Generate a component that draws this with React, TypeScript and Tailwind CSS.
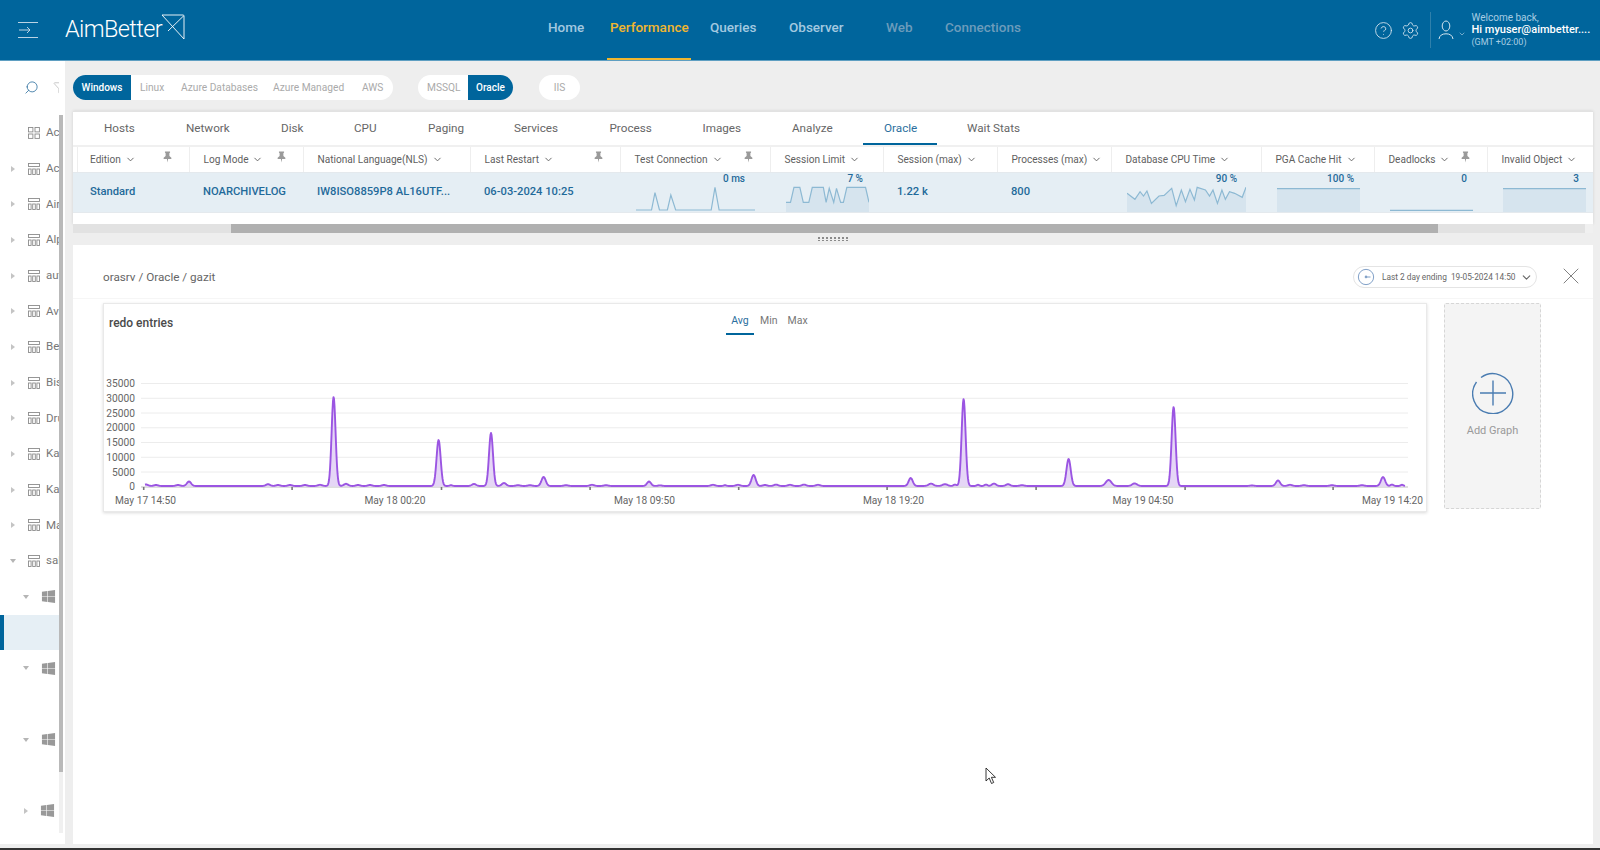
import { ChevronDown, X, Search, Filter, Settings, CircleHelp } from 'lucide-react';
import { FaWindows } from 'react-icons/fa';

const navItems = [
  { label: 'Home', cls: 'w-[62px] text-[#a3c9e0]' },
  { label: 'Performance', cls: 'w-[100px] text-[#f0b62f]', active: true },
  { label: 'Queries', cls: 'w-[79px] text-[#a3c9e0]' },
  { label: 'Observer', cls: 'w-[97px] text-[#a3c9e0]' },
  { label: 'Web', cls: 'w-[59px] text-[#6c9cbb]' },
  { label: 'Connections', cls: 'w-[90px] text-[#6c9cbb]' },
];

const tabs = [
  { label: 'Hosts', cls: 'w-[82px]' },
  { label: 'Network', cls: 'w-[95px]' },
  { label: 'Disk', cls: 'w-[73px]' },
  { label: 'CPU', cls: 'w-[74px]' },
  { label: 'Paging', cls: 'w-[86px]' },
  { label: 'Services', cls: 'w-[95.5px]' },
  { label: 'Process', cls: 'w-[93px]' },
  { label: 'Images', cls: 'w-[89.5px]' },
  { label: 'Analyze', cls: 'w-[92px]' },
  { label: 'Oracle', cls: 'w-[83px]', active: true },
  { label: 'Wait Stats', cls: 'w-[70px]' },
];

// spark points are in crop pixels, the viewBox takes care of the scale
const cpuLine =
  '192,250 215,268 230,245 240,258 250,243 263,280 285,258 300,256 322,235 335,287 350,240 362,275 375,238 388,270 396,232 420,240 432,258 442,240 455,280 468,240 478,268 490,245 505,250 527,262 538,232';
const limitLine =
  '772,277 785,277 795,232 812,232 822,277 838,277 848,232 880,232 888,277 897,235 910,277 918,235 930,277 938,277 948,232 1002,232 1012,277';
const testLine =
  '337,300 382,300 392,248 405,300 428,300 438,255 452,300 555,300 566,232 578,300 682,300';

type Col = {
  label: string;
  cls: string;
  pin?: boolean;
  value?: string;
  badge?: string;
  badgeCls?: string;
  svgCls?: string;
  box?: string;
  line?: string;
  fill?: boolean;
};

const cols: Col[] = [
  { label: 'Edition', cls: 'w-[112px]', pin: true, value: 'Standard' },
  { label: 'Log Mode', cls: 'w-[114px]', pin: true, value: 'NOARCHIVELOG' },
  { label: 'National Language(NLS)', cls: 'w-[167px]', value: 'IW8ISO8859P8 AL16UTF...' },
  { label: 'Last Restart', cls: 'w-[150px]', pin: true, value: '06-03-2024 10:25' },
  { label: 'Test Connection', cls: 'w-[150px]', pin: true, badge: '0 ms', badgeCls: 'w-[119px] pr-[10px]', svgCls: 'w-[119px]', box: '337 225 345 81', line: testLine },
  { label: 'Session Limit', cls: 'w-[113px]', badge: '7 %', badgeCls: 'w-[83px] pr-[6px]', svgCls: 'w-[83px]', box: '772 225 240 81', line: limitLine, fill: true },
  { label: 'Session (max)', cls: 'w-[114px]', value: '1.22 k' },
  { label: 'Processes (max)', cls: 'w-[114px]', value: '800' },
  { label: 'Database CPU Time', cls: 'w-[150px]', badge: '90 %', badgeCls: 'w-[119px] pr-[9px]', svgCls: 'w-[119px]', box: '192 225 346 81', line: cpuLine, fill: true },
  { label: 'PGA Cache Hit', cls: 'w-[113px]', badge: '100 %', badgeCls: 'w-[83px] pr-[6px]', svgCls: 'w-[83px]', box: '628 225 240 81', line: '628,236 868,236', fill: true },
  { label: 'Deadlocks', cls: 'w-[113px]', pin: true, badge: '0', badgeCls: 'w-[83px] pr-[6px]', svgCls: 'w-[83px]', box: '957 225 240 81', line: '957,301 1197,301' },
  { label: 'Invalid Object', cls: 'w-[106px]', badge: '3', badgeCls: 'w-[83px] pr-[7px]', svgCls: 'w-[83px]', box: '1287 225 240 81', line: '1287,236 1527,236', fill: true },
];

const treeRows = ['Ac', 'Air', 'Alp', 'aut', 'Avi', 'Be', 'Bis', 'Dru', 'Ka', 'Ka', 'Ma'];

// redo entries peaks: [x, height, width]
const peaks: number[][] = [
  [146, 1.5, 3], [156, 1, 3], [178, 1, 3], [189, 4.5, 3], [268, 1.8, 3], [278, 1, 3], [290, 1, 3], [305, 1, 3], [320, 1.2, 3],
  [333.6, 89, 2.8], [346, 2.2, 3], [358, 1, 3], [370, 1, 3], [384, 1, 3], [438.6, 46, 2.9], [451, 0.8, 2], [474, 2, 3],
  [491, 53, 2.8], [504, 3, 3], [518, 0.8, 3], [530, 0.8, 3], [543.6, 9, 3], [566, 0.8, 3], [592, 1.2, 3], [606, 0.8, 3],
  [649, 4.5, 2.8], [660, 0.6, 3], [713, 1.2, 3], [725, 0.8, 2], [738, 1.2, 3], [753.6, 11, 3], [765, 1, 3], [776, 1.4, 3],
  [790, 1.2, 3], [804, 1.4, 3], [818, 1.2, 3], [910.7, 8, 2.9], [931, 2.4, 3.5], [945, 1.8, 3.5], [955, 1.4, 2], [963.6, 87, 2.8],
  [978, 1.2, 2], [986, 1.4, 2], [994, 2.4, 3], [1008, 1.8, 3], [1022, 0.8, 3], [1068.6, 27, 3], [1108.6, 6, 4], [1134.6, 2.6, 3.5],
  [1173.6, 79, 2.8], [1252, 0.5, 3], [1278, 5.5, 3], [1290, 1.2, 3], [1304, 0.8, 3], [1332, 0.8, 3], [1362, 0.8, 3], [1383, 9, 3], [1392, 1.4, 2], [1402, 1.2, 2],
];

function redoPoints() {
  const out: string[] = [];
  for (let x = 145; x <= 1405; x += 0.5) {
    let h = 0.4;
    for (const [c, a, w] of peaks) h += a * Math.exp(-(((x - c) / w) ** 2));
    out.push(`${x},${(486.4 - h).toFixed(2)}`);
  }
  return out;
}

function Pin() {
  return (
    <svg viewBox="0 0 10 14" className="h-[12px] w-[9px] -mt-[5px]" fill="#9a9a9a">
      <path d="M2 0.5h6v1.2L7.2 2.6v3.2L9.5 8v1.2H5.7L5 13.5l-.7-4.3H.5V8l2.3-2.2V2.6L2 1.7z" />
    </svg>
  );
}

function HostIcon({ grid }: { grid?: boolean }) {
  if (grid) {
    return (
      <svg viewBox="0 0 12 12" className="h-[12px] w-[12px] shrink-0" fill="none" stroke="#8c8c8c" strokeWidth="0.9">
        <rect x="0.5" y="0.5" width="4.4" height="4.4" />
        <rect x="7" y="0.5" width="4.4" height="4.4" />
        <rect x="0.5" y="7" width="4.4" height="4.4" />
        <rect x="7" y="7" width="4.4" height="4.4" />
      </svg>
    );
  }
  return (
    <svg viewBox="0 0 12 12" className="h-[12px] w-[12px] shrink-0" fill="none" stroke="#8c8c8c" strokeWidth="0.9">
      <rect x="0.5" y="0.5" width="11" height="3" />
      <rect x="0.5" y="6" width="2.6" height="5.5" />
      <rect x="4.7" y="6" width="2.6" height="5.5" />
      <rect x="8.9" y="6" width="2.6" height="5.5" />
    </svg>
  );
}

function Caret({ open }: { open?: boolean }) {
  return open ? (
    <span className="h-0 w-0 shrink-0 border-x-[3px] border-t-[4px] border-x-transparent border-t-[#b5b5b5]" />
  ) : (
    <span className="h-0 w-0 shrink-0 border-y-[3px] border-l-[4px] border-y-transparent border-l-[#c4c4c4]" />
  );
}

function Sidebar() {
  return (
    <aside className="flex h-full w-[65px] shrink-0 bg-white">
      <div className="w-[59px] shrink-0 overflow-hidden">
        <div className="flex h-[54px] items-start pl-[24px] pt-[19px]">
          <Search size={15} color="#2c6f9e" strokeWidth={1.3} className="shrink-0 -scale-x-100" />
          <Filter size={14} color="#b5b5b5" strokeWidth={1.2} className="ml-[14px] mt-[1px] shrink-0" />
        </div>
        <div className="flex h-[35.7px] items-center pl-[28px]">
          <HostIcon grid />
          <span className="ml-[6px] whitespace-nowrap text-[11.5px] text-[#777]">Ac</span>
        </div>
        {treeRows.map((name, i) => (
          <div key={i} className="flex h-[35.7px] items-center pl-[11px]">
            <Caret />
            <span className="ml-[13px] flex shrink-0"><HostIcon /></span>
            <span className="ml-[6px] whitespace-nowrap text-[11.5px] text-[#777]">{name}</span>
          </div>
        ))}
        <div className="flex h-[35.7px] items-center pl-[10px]">
          <Caret open />
          <span className="ml-[12px] flex shrink-0"><HostIcon /></span>
          <span className="ml-[6px] whitespace-nowrap text-[11.5px] text-[#777]">sal</span>
        </div>
        <div className="flex h-[35.7px] items-center pl-[23px]">
          <Caret open />
          <FaWindows size={15} color="#999" className="ml-[12px]" />
        </div>
        <div className="h-[35.7px] border-l-4 border-[#00659c] bg-[#e6eff5]" />
        <div className="flex h-[35.7px] items-center pl-[23px]">
          <Caret open />
          <FaWindows size={15} color="#999" className="ml-[12px]" />
        </div>
        <div className="h-[35.7px]" />
        <div className="flex h-[35.7px] items-center pl-[23px]">
          <Caret open />
          <FaWindows size={15} color="#999" className="ml-[12px]" />
        </div>
        <div className="h-[35.7px]" />
        <div className="flex h-[35.7px] items-center pl-[24px]">
          <Caret />
          <FaWindows size={15} color="#999" className="ml-[12px]" />
        </div>
      </div>
      <div className="mt-[54px] h-[718px] w-[4px] bg-[#f0f0f0]">
        <div className="h-[657px] w-full bg-[#b9b9b9]" />
      </div>
    </aside>
  );
}

function PillBar() {
  return (
    <div className="flex h-[25px] items-center text-[10.2px] text-[#aaaaaa]">
      <div className="flex h-full w-[320px] items-center rounded-full bg-white">
        <span className="flex h-full w-[58px] items-center justify-center rounded-l-full bg-[#00659c] text-[10px] font-medium text-white">Windows</span>
        <span className="ml-[9px] w-[41px]">Linux</span>
        <span className="w-[92px]">Azure Databases</span>
        <span className="w-[89px]">Azure Managed</span>
        <span>AWS</span>
      </div>
      <div className="ml-[25px] flex h-full w-[95px] items-center rounded-full bg-white">
        <span className="ml-[9px] w-[41px]">MSSQL</span>
        <span className="flex h-full flex-1 items-center justify-center rounded-r-full bg-[#00659c] text-[10px] font-medium text-white">Oracle</span>
      </div>
      <div className="ml-[26px] flex h-full w-[41px] items-center justify-center rounded-full bg-white">IIS</div>
    </div>
  );
}

function HostTable() {
  return (
    <section className="mt-[11px] h-[113px] shrink-0 border-t border-[#e2e2e2] bg-white shadow-[0_0_3px_rgba(0,0,0,0.12)]">
      <div className="flex h-[33px] pl-[31px] text-[11.7px] text-[#666]">
        {tabs.map((t) => (
          <div key={t.label} className={`relative flex items-center ${t.cls} ${t.active ? 'text-[#2c6f9e]' : ''}`}>
            {t.label}
            {t.active && <span className="absolute bottom-0 -left-[21px] h-[2px] w-[74px] bg-[#00659c]" />}
          </div>
        ))}
      </div>
      <div className="border-t-2 border-[#f0f0f0] pl-[4px]">
        <div className="flex h-[25px] text-[10.1px] text-[#5f5f5f]">
          {cols.map((c, i) => (
            <div key={c.label} className={`flex shrink-0 items-center border-l border-[#eeeeee] ${i === 0 ? 'pl-[12px]' : 'pl-[13.5px]'} ${c.cls}`}>
              <span className="whitespace-nowrap">{c.label}</span>
              <ChevronDown size={11} strokeWidth={2} className="ml-[4px] shrink-0" />
              {c.pin && <span className="ml-auto mr-[17px] flex"><Pin /></span>}
            </div>
          ))}
        </div>
      </div>
      <div className="flex h-[41px] border-y border-[#e4e9ed] bg-[#e5eef4] pl-[4px] text-[11.2px] font-medium text-[#1f6a9a]">
        {cols.map((c, i) => (
          <div key={c.label} className={`shrink-0 ${i === 0 ? 'pl-[13px]' : 'pl-[14px]'} ${c.cls} ${c.value ? 'flex items-center' : 'pl-[16px]'}`}>
            {c.value ? (
              <span className="whitespace-nowrap">{c.value}</span>
            ) : (
              <>
                <div className={`text-right text-[10px] leading-[12px] ${c.badgeCls}`}>{c.badge}</div>
                <svg viewBox={c.box} preserveAspectRatio="none" className={`h-[27px] ${c.svgCls}`}>
                  {c.fill && <polygon points={`${c.line} ${c.line!.split(' ').pop()!.split(',')[0]},306 ${c.line!.split(' ')[0].split(',')[0]},306`} fill="#d6e4ee" />}
                  <polyline points={c.line} fill="none" stroke="#8db9d3" strokeWidth="1.2" vectorEffect="non-scaling-stroke" />
                </svg>
              </>
            )}
          </div>
        ))}
      </div>
    </section>
  );
}

function RedoChart() {
  const yTicks = [35000, 30000, 25000, 20000, 15000, 10000, 5000, 0];
  const xTicks = [143.6, 292, 441.4, 590, 738.6, 887, 1036, 1185, 1333];
  const xLabels: [number, string][] = [
    [145.5, 'May 17 14:50'],
    [395, 'May 18 00:20'],
    [644.5, 'May 18 09:50'],
    [893.5, 'May 18 19:20'],
    [1143, 'May 19 04:50'],
    [1392.5, 'May 19 14:20'],
  ];
  const pts = redoPoints();
  return (
    <div className="h-[209px] w-[1324px] shrink-0 border border-[#e9e9e9] bg-white shadow-[0_1px_3px_rgba(0,0,0,0.15)]">
      <div className="flex h-[32px] items-start">
        <div className="w-[622px] pl-[5px] pt-[11px] text-[12px] font-medium leading-[16px] text-[#4a4a4a]">redo entries</div>
        <div className="flex pt-[10px] text-[10.5px] leading-[14px] text-[#777]">
          <span className="h-[21px] w-[28px] border-b-2 border-[#00659c] text-center text-[#2c6f9e]">Avg</span>
          <span className="ml-[6px]">Min</span>
          <span className="ml-[10px]">Max</span>
        </div>
      </div>
      <svg viewBox="104 336 1322 175" className="block h-[175px] w-[1322px]" fontFamily="Roboto, sans-serif" fontSize="10.2" fill="#666">
        {yTicks.map((v, i) => {
          const y = 383.5 + i * 14.75;
          return (
            <g key={v}>
              {v > 0 && <line x1="141" x2="1408" y1={y} y2={y} stroke="#ececec" />}
              <text x="135" y={y + 3.5} textAnchor="end">{v}</text>
            </g>
          );
        })}
        <line x1="141" x2="1408" y1="487" y2="487" stroke="#bdbdbd" />
        {xTicks.map((x) => (
          <rect key={x} x={x - 0.7} y="487" width="1.6" height="3" fill="#777" />
        ))}
        <polygon points={`145,486.6 ${pts.join(' ')} 1405,486.6`} fill="#e5d6f6" stroke="none" />
        <polyline points={pts.join(' ')} fill="none" stroke="#9b55e2" strokeWidth="1.9" strokeLinejoin="round" />
        {xLabels.map(([x, t]) => (
          <text key={t} x={x} y="504" textAnchor="middle">{t}</text>
        ))}
      </svg>
    </div>
  );
}

function AddGraph() {
  return (
    <div className="ml-[17px] flex h-[206px] w-[97px] flex-col items-center rounded-[2px] border border-dashed border-[#d6d6d6] bg-[#f4f4f4] pt-[68px]">
      <svg viewBox="0 0 42 42" className="h-[42px] w-[42px]" fill="none" stroke="#4a7cb1" strokeWidth="1.4">
        <path d="M9 5.5A20 20 0 1 1 4.5 10" />
        <path d="M21 8.5v25M8 21h26" />
      </svg>
      <span className="mt-[9px] text-[11px] text-[#9a9a9a]">Add Graph</span>
    </div>
  );
}

function DetailPanel() {
  return (
    <section className="min-h-0 flex-1 bg-white">
      <div className="flex h-[54px] items-center border-b border-[#f6f6f6] pl-[30px] pt-[13px]">
        <span className="text-[11.7px] text-[#666]">orasrv / Oracle / gazit</span>
        <div className="ml-auto -mt-[2px] flex h-[22px] w-[184px] items-center rounded-full border border-[#e4e4e4] pl-[3px]">
          <svg viewBox="0 0 20 20" className="h-[18px] w-[18px] shrink-0" fill="none" stroke="#7f9fc6" strokeWidth="1.1">
            <circle cx="10" cy="10" r="8.5" />
            <path d="M10 10H15M10 10V8.5" />
            <circle cx="10" cy="10" r="1" fill="#7f9fc6" />
          </svg>
          <span className="ml-[7px] whitespace-nowrap text-[8.3px] text-[#666]">Last 2 day ending&nbsp; 19-05-2024 14:50</span>
          <ChevronDown size={13} color="#666" className="ml-[4px] shrink-0" />
        </div>
        <X size={28} color="#777" strokeWidth={0.8} className="ml-[20px] mr-[8px] -mt-[4px] shrink-0" />
      </div>
      <div className="flex pl-[30px] pt-[4px]">
        <RedoChart />
        <AddGraph />
      </div>
    </section>
  );
}

export default function App() {
  return (
    <div className="relative flex h-[850px] w-[1600px] flex-col overflow-hidden bg-[#eeeeee] font-['Roboto',sans-serif]">
      <header className="flex h-[61px] shrink-0 items-center border-b border-[#5f9fc2] bg-[#00659c]">
        <div className="flex w-[548px] shrink-0 items-center pl-[18px]">
          <svg viewBox="0 0 20 16" className="h-[16px] w-[20px]" fill="none" stroke="#cfe0ec" strokeWidth="0.9">
            <path d="M0 .5h20M0 15.5h20M1 8h11M9 5l3 3-3 3" />
          </svg>
          <span className="ml-[27px] text-[23.5px] font-light tracking-[-0.6px] text-white">AimBetter</span>
          <svg viewBox="0 0 24 26" className="-mt-[6px] ml-[-1px] h-[26px] w-[24px]" fill="none" stroke="#fff" strokeWidth="0.9">
            <path d="M1 1h21.5M1 1l22 24V1.5L7 17" />
          </svg>
        </div>
        <nav className="flex h-full items-center text-[13.5px] font-medium">
          {navItems.map((n) => (
            <div key={n.label} className={`relative flex h-full items-center pb-[6px] ${n.cls}`}>
              {n.label}
              {n.active && <span className="absolute bottom-0 -left-[3px] h-[2px] w-[84px] bg-[#f0b62f]" />}
            </div>
          ))}
        </nav>
        <div className="ml-auto flex w-[226px] shrink-0 items-center">
          <CircleHelp size={19} color="#d5e5ef" strokeWidth={1.1} />
          <Settings size={19} color="#d5e5ef" strokeWidth={1.1} className="ml-[7.5px]" />
          <div className="ml-[10px] h-[36px] w-px bg-[#2f80ab]" />
          <svg viewBox="0 0 16 20" className="ml-[7px] h-[20px] w-[16px]" fill="none" stroke="#d5e5ef" strokeWidth="1">
            <ellipse cx="8" cy="6" rx="3.8" ry="5" />
            <path d="M1 19c.6-3.6 3-5.2 7-5.2s6.4 1.6 7 5.2" />
          </svg>
          <ChevronDown size={8} color="#a8cde3" className="ml-[4px] mt-[7px]" />
          <div className="ml-[6px] flex flex-col leading-[12px]">
            <span className="text-[10px] text-[#a8cde3]">Welcome back,</span>
            <span className="text-[11px] font-medium text-white">Hi myuser@aimbetter....</span>
            <span className="text-[9px] text-[#a8cde3]">(GMT +02:00)</span>
          </div>
        </div>
      </header>
      <div className="flex min-h-0 flex-1 pb-[4px]">
        <Sidebar />
        <main className="ml-[8px] mr-[7px] flex min-w-0 flex-1 flex-col">
          <div className="shrink-0 pt-[14px]"><PillBar /></div>
          <HostTable />
          <div className="flex h-[9px] shrink-0 bg-[#e2e2e2]">
            <div className="ml-[158px] h-full w-[1207px] bg-[#b0b0b0]" />
            <div className="ml-auto h-full w-[8px] bg-[#f0f0f0]" />
          </div>
          <div className="flex h-[12px] shrink-0 items-center justify-center">
            <div className="grid grid-cols-8 gap-x-[2.5px] gap-y-[1px]">
              {Array.from({ length: 16 }).map((_, i) => (
                <span key={i} className="h-[1.5px] w-[1.5px] bg-[#8a8a8a]" />
              ))}
            </div>
          </div>
          <DetailPanel />
        </main>
      </div>
      <div className="h-[2px] shrink-0 bg-[#333]" />
      <svg viewBox="0 0 12 18" className="absolute left-[985px] top-[767px] h-[18px] w-[12px]" fill="#fff" stroke="#222" strokeWidth="0.9">
        <path d="M1 1v13l3.2-3 2.3 5.5 2.2-1-2.3-5.2H10.5z" />
      </svg>
    </div>
  );
}
